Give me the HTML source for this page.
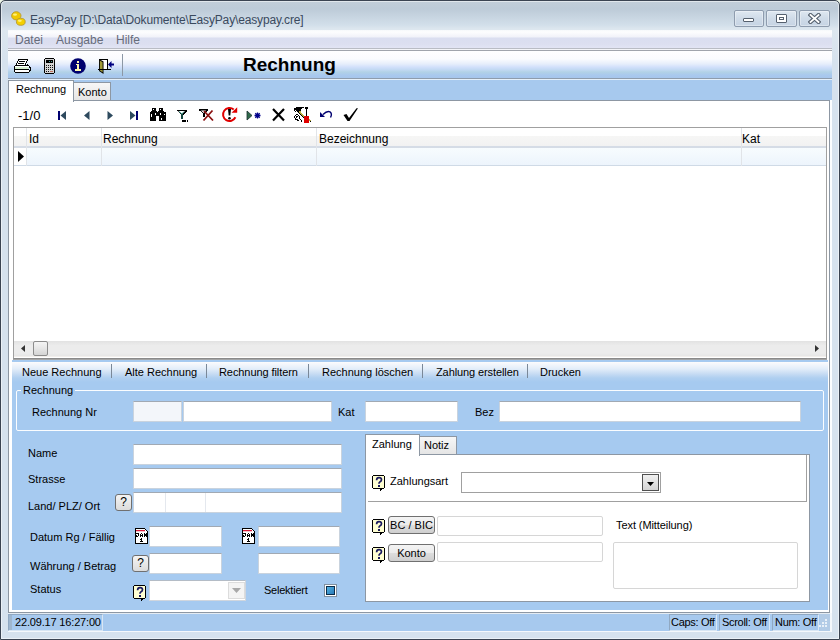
<!DOCTYPE html>
<html><head><meta charset="utf-8">
<style>
*{margin:0;padding:0;box-sizing:border-box}
html,body{width:840px;height:640px;overflow:hidden;background:#eef6e8}
body{position:relative;font-family:"Liberation Sans",sans-serif;font-size:11px;color:#000}
.a{position:absolute}
.t{position:absolute;white-space:nowrap;line-height:13px}
#win{left:0;top:0;width:840px;height:640px;border:1px solid #3b4452;border-radius:5px 5px 0 0;
 background:linear-gradient(#c2ced9 0px,#bdcbd8 8px,#d2dfea 24px,#dde7ef 28px,#d6e2ee 60px,#d6e2ee 640px);overflow:hidden}
#wininner{left:0;top:0;width:838px;height:638px;border:1px solid rgba(255,255,255,.5);border-radius:4px 4px 0 0}
.cap{top:10px;height:17px;border:1px solid #8e9cae;border-radius:2px;background:linear-gradient(#dfe8f1,#cfdbe8 50%,#c6d4e4);box-shadow:inset 0 0 0 1px rgba(255,255,255,.35)}
#menu{left:8px;top:30px;width:824px;height:18px;background:linear-gradient(#f6f8fb 0,#fdfdfe 2px,#f1f2f9 7px,#dadef0 8px,#dcdff0 14px,#e2e4f4 100%)}
.mi{color:#676c7a;font-size:12px;top:34px}
#tb{left:8px;top:51px;width:824px;height:27px;background:linear-gradient(#fefeff 0,#fafbfe 8px,#e6eefb 13px,#d2e0fb 16px,#c0d8f2 19px,#b2d2e6 21px,#a9c9ee 24px,#a6c6ec 27px)}
#tabstrip{left:8px;top:78px;width:824px;height:22px;background:#a7c9ee;border-top:1px solid #8e9cac;box-shadow:inset 0 1px 0 #e4f0fb}
#panel{left:8px;top:100px;width:822px;height:513px;background:#fff;border:1px solid #8d97a3}
#grid{left:13px;top:127px;width:814px;height:232px;border:1px solid #a0a0a0;border-bottom-color:#8a8a8a;background:#fff}
.hdr{top:0;height:19px;background:linear-gradient(#fff 0,#fff 8px,#f6f6f5 8px,#f2f2f2 18px)}
.blue{left:12px;top:360px;width:816px;height:250px;background:#a6caf0}
.inp{position:absolute;background:#fff;border:1px solid #c9d3de;border-top-color:#a1a9b3}
.lbl{position:absolute;white-space:nowrap;line-height:13px;font-size:11px;color:#000}
.qb{border:1px solid #707070;border-radius:3px;background:linear-gradient(#f4f4f4,#dcdcdc);text-align:center;font-size:12px;line-height:14px;color:#000}
.btn{border:1px solid #707070;border-radius:3px;background:linear-gradient(#f4f4f4 0,#ebebeb 50%,#dddddd 51%,#cfcfcf 100%);text-align:center;font-size:11px;line-height:16px;color:#000}
.sp{border:1px solid;border-color:#90a8c2 #d8e6f4 #d8e6f4 #90a8c2}
</style></head><body>
<div id="win" class="a"><div id="wininner" class="a"></div></div>

<!-- title -->
<svg class="a" style="left:10px;top:10px" width="18" height="17" viewBox="0 0 18 17">
 <ellipse cx="6.3" cy="5.8" rx="4.7" ry="4.1" fill="#f0c800" stroke="#b89a30" stroke-width=".9"/>
 <ellipse cx="10.8" cy="11.8" rx="4.4" ry="3.5" fill="#f4d000" stroke="#b89a30" stroke-width=".9"/>
 <ellipse cx="5" cy="4.6" rx="2" ry="1.2" fill="#fff07a"/>
 <ellipse cx="9.8" cy="10.8" rx="2" ry="1.1" fill="#fff07a"/>
</svg>
<div class="t" style="left:30px;top:13px;font-size:12px;color:#3a4a5e;letter-spacing:-0.15px;line-height:14px">EasyPay [D:\Data\Dokumente\EasyPay\easypay.cre]</div>
<div class="a cap" style="left:734px;width:30px"></div>
<div class="a cap" style="left:766px;width:31px"></div>
<div class="a cap" style="left:799px;width:31px"></div>
<div class="a" style="left:743px;top:18px;width:11px;height:4px;border:1px solid #55606e;background:#fff;border-radius:1px"></div>
<div class="a" style="left:776px;top:14px;width:11px;height:9px;border:1px solid #55606e;background:#fff;border-radius:1px"><div class="a" style="left:2px;top:2px;width:5px;height:3px;border:1px solid #55606e"></div></div>
<svg class="a" style="left:808px;top:13px" width="13" height="11" viewBox="0 0 13 11"><path d="M2.5 2 L10.5 9 M10.5 2 L2.5 9" stroke="#55606e" stroke-width="4" stroke-linecap="square"/><path d="M2.5 2 L10.5 9 M10.5 2 L2.5 9" stroke="#fff" stroke-width="1.8" stroke-linecap="square"/></svg>

<!-- menu -->
<div id="menu" class="a"></div>
<div class="a" style="left:8px;top:48px;width:824px;height:1px;background:#b9bcc4"></div>
<div class="a" style="left:8px;top:49px;width:824px;height:1px;background:#f3f4f8"></div>
<div class="a" style="left:8px;top:50px;width:824px;height:1px;background:#a0a4ac"></div>
<div class="t mi" style="left:15px">Datei</div>
<div class="t mi" style="left:56px">Ausgabe</div>
<div class="t mi" style="left:116px">Hilfe</div>

<!-- toolbar -->
<div id="tb" class="a"></div>
<div class="a" style="left:122px;top:54px;width:1px;height:22px;background:#8c98a6"></div>
<div class="t" style="left:243px;top:54px;font-size:19px;font-weight:bold;line-height:22px">Rechnung</div>


<!-- toolbar icons -->
<svg class="a" style="left:14px;top:59px" width="17" height="14" viewBox="0 0 17 14" shape-rendering="crispEdges"><rect x="5" y="1" width="8" height="1" fill="#fff"/><rect x="4" y="2" width="1" height="1" fill="#fff"/><rect x="11" y="2" width="1" height="1" fill="#fff"/><rect x="4" y="3" width="8" height="1" fill="#fff"/><rect x="3" y="4" width="1" height="1" fill="#fff"/><rect x="10" y="4" width="1" height="1" fill="#fff"/><rect x="3" y="5" width="8" height="1" fill="#fff"/><rect x="1" y="7" width="14" height="1" fill="#fff"/><rect x="1" y="11" width="14" height="1" fill="#fff"/><rect x="1" y="12" width="14" height="1" fill="#fff"/><rect x="4" y="0" width="10" height="1" fill="#000"/><rect x="4" y="1" width="1" height="1" fill="#000"/><rect x="13" y="1" width="1" height="1" fill="#000"/><rect x="3" y="2" width="1" height="1" fill="#000"/><rect x="5" y="2" width="6" height="1" fill="#000"/><rect x="12" y="2" width="1" height="1" fill="#000"/><rect x="3" y="3" width="1" height="1" fill="#000"/><rect x="12" y="3" width="1" height="1" fill="#000"/><rect x="2" y="4" width="1" height="1" fill="#000"/><rect x="4" y="4" width="6" height="1" fill="#000"/><rect x="11" y="4" width="1" height="1" fill="#000"/><rect x="2" y="5" width="1" height="1" fill="#000"/><rect x="11" y="5" width="1" height="1" fill="#000"/><rect x="13" y="5" width="1" height="1" fill="#000"/><rect x="1" y="6" width="14" height="1" fill="#000"/><rect x="0" y="7" width="1" height="1" fill="#000"/><rect x="15" y="7" width="1" height="1" fill="#000"/><rect x="0" y="8" width="1" height="1" fill="#000"/><rect x="1" y="8" width="13" height="1" fill="#d8f0d0"/><rect x="15" y="8" width="2" height="1" fill="#000"/><rect x="0" y="9" width="1" height="1" fill="#000"/><rect x="1" y="9" width="14" height="1" fill="#d8f0d0"/><rect x="16" y="9" width="1" height="1" fill="#000"/><rect x="0" y="10" width="15" height="1" fill="#000"/><rect x="16" y="10" width="1" height="1" fill="#000"/><rect x="0" y="11" width="1" height="1" fill="#000"/><rect x="15" y="11" width="2" height="1" fill="#000"/><rect x="0" y="12" width="1" height="1" fill="#000"/><rect x="15" y="12" width="1" height="1" fill="#000"/><rect x="1" y="13" width="14" height="1" fill="#000"/></svg>
<svg class="a" style="left:44px;top:58px" width="11" height="16" viewBox="0 0 11 16" shape-rendering="crispEdges">
 <path d="M1 0h9v1h1v14h-1v1h-9v-1h-1v-14h1z" fill="#000"/>
 <rect x="1" y="1" width="9" height="14" fill="#d4d4d4"/>
 <rect x="2" y="2" width="7" height="3" fill="#000"/>
 <rect x="5" y="3" width="1" height="1" fill="#4a9a9a"/><rect x="7" y="3" width="1" height="1" fill="#4a9a9a"/>
 <g fill="#111"><rect x="2" y="7" width="1" height="1"/><rect x="4" y="7" width="1" height="1"/><rect x="6" y="7" width="1" height="1"/><rect x="8" y="7" width="1" height="1"/>
 <rect x="2" y="9" width="1" height="1"/><rect x="4" y="9" width="1" height="1"/><rect x="6" y="9" width="1" height="1"/><rect x="8" y="9" width="1" height="1"/>
 <rect x="2" y="11" width="1" height="1"/><rect x="4" y="11" width="1" height="1"/><rect x="6" y="11" width="1" height="1"/><rect x="8" y="11" width="1" height="1"/>
 <rect x="2" y="13" width="1" height="1"/><rect x="4" y="13" width="1" height="1"/></g>
 <rect x="6" y="13" width="3" height="1" fill="#c07060"/>
</svg>
<svg class="a" style="left:70px;top:58px" width="16" height="16" viewBox="0 0 16 16">
 <circle cx="8" cy="8" r="7.8" fill="#00006e"/>
 <g fill="#fff8b0" shape-rendering="crispEdges"><rect x="7" y="3" width="2" height="2"/><rect x="6" y="6" width="3" height="1"/><rect x="7" y="7" width="2" height="4"/><rect x="5" y="11" width="6" height="2"/></g>
</svg>
<svg class="a" style="left:98px;top:58px" width="17" height="17" viewBox="0 0 17 17" shape-rendering="crispEdges">
 <path d="M1 1h9v11h-9z" fill="#000"/><rect x="2" y="2" width="7" height="9" fill="#fff"/>
 <path d="M1 1 L5.5 3.5 V16 L1 13Z" fill="#000" shape-rendering="auto"/>
 <path d="M1.9 2.6 L4.6 4.2 V14.2 L1.9 12.4Z" fill="#a09a38" shape-rendering="auto"/>
 <rect x="0" y="11" width="13" height="1" fill="#000"/>
 <path d="M10 6.5 L13.5 3 V5.5 H16 V7.5 H13.5 V10Z" fill="#000080" shape-rendering="auto"/>
</svg>
<!-- tab strip -->
<div id="tabstrip" class="a"></div>
<div class="a" style="left:73px;top:82px;width:38px;height:19px;border:1px solid #8d97a3;border-bottom:none;background:linear-gradient(#f7f7f7,#e4e4e4)"></div>
<div class="a" style="left:8px;top:80px;width:66px;height:22px;border:1px solid #8d97a3;border-bottom:none;background:#fff;z-index:2"></div>
<div class="t" style="left:16px;top:83px;z-index:3;font-size:11px">Rechnung</div>
<div class="t" style="left:78px;top:86px;font-size:11px">Konto</div>

<!-- panel -->
<div id="panel" class="a"></div>
<div class="a" style="left:830px;top:100px;width:2px;height:513px;background:#fbfdff"></div>
<div class="t" style="left:18px;top:109px;font-size:13px">-1/0</div>
<!-- nav icons -->
<svg class="a" style="left:56px;top:109px" width="310" height="16" viewBox="56 109 310 16" >
 <g shape-rendering="crispEdges"><rect x="58" y="111" width="2" height="9" fill="#000070"/><rect x="136" y="111" width="2" height="9" fill="#000070"/></g>
 <path d="M66 111 L60.5 115.5 L66 120Z" fill="#2e4a5e"/>
 <path d="M89.5 111 L84 115.5 L89.5 120Z" fill="#2e4a5e"/>
 <path d="M107.5 111 L113 115.5 L107.5 120Z" fill="#2e4a5e"/>
 <path d="M130 111 L135.5 115.5 L130 120Z" fill="#2e4a5e"/>
</svg>
<svg class="a" style="left:148px;top:105px" width="215" height="20" viewBox="148 105 215 20">
 <g shape-rendering="crispEdges" fill="#000">
  <!-- binoculars -->
 </g>
 <g shape-rendering="crispEdges"><rect x="152" y="108" width="4" height="1" fill="#000"/><rect x="159" y="108" width="4" height="1" fill="#000"/><rect x="152" y="109" width="1" height="1" fill="#000"/><rect x="154" y="109" width="2" height="1" fill="#000"/><rect x="159" y="109" width="1" height="1" fill="#000"/><rect x="161" y="109" width="2" height="1" fill="#000"/><rect x="152" y="110" width="4" height="1" fill="#000"/><rect x="159" y="110" width="4" height="1" fill="#000"/><rect x="151" y="111" width="6" height="1" fill="#000"/><rect x="158" y="111" width="6" height="1" fill="#000"/><rect x="150" y="112" width="16" height="1" fill="#000"/><rect x="150" y="113" width="5" height="1" fill="#000"/><rect x="156" y="113" width="4" height="1" fill="#000"/><rect x="161" y="113" width="5" height="1" fill="#000"/><rect x="150" y="114" width="1" height="1" fill="#000"/><rect x="152" y="114" width="3" height="1" fill="#000"/><rect x="156" y="114" width="4" height="1" fill="#000"/><rect x="161" y="114" width="3" height="1" fill="#000"/><rect x="165" y="114" width="1" height="1" fill="#000"/><rect x="150" y="115" width="1" height="1" fill="#000"/><rect x="152" y="115" width="14" height="1" fill="#000"/><rect x="150" y="116" width="1" height="1" fill="#000"/><rect x="152" y="116" width="4" height="1" fill="#000"/><rect x="159" y="116" width="7" height="1" fill="#000"/><rect x="150" y="117" width="6" height="1" fill="#000"/><rect x="159" y="117" width="7" height="1" fill="#000"/><rect x="150" y="118" width="6" height="1" fill="#000"/><rect x="159" y="118" width="2" height="1" fill="#000"/><rect x="162" y="118" width="4" height="1" fill="#000"/><rect x="150" y="119" width="6" height="1" fill="#000"/><rect x="159" y="119" width="2" height="1" fill="#000"/><rect x="162" y="119" width="4" height="1" fill="#000"/><rect x="150" y="120" width="6" height="1" fill="#000"/><rect x="159" y="120" width="7" height="1" fill="#000"/></g>
 <!-- filter -->
 <path d="M176 110 H187 V111 L183 115 V119 H181 V115 L177 111Z" fill="#000" shape-rendering="crispEdges"/>
 <path d="M178 111 H185 L182 114Z" fill="#fff"/>
 <path d="M181.5 114 L182.5 114 L182.5 119 L181.5 119Z" fill="#2a8a7a"/>
 <path d="M179 111.5 L182 114 L184 111.5" stroke="#3a9a8a" fill="none" stroke-width=".9"/>
 <rect x="182" y="120" width="4" height="2" fill="#000" shape-rendering="crispEdges"/><rect x="187" y="120" width="1" height="2" fill="#000" shape-rendering="crispEdges"/>
 <!-- filter x -->
 <path d="M199 109 H208 V110.5 L205 113.5 V117 H203 V113.5 L199.5 110.5Z" fill="#000" shape-rendering="crispEdges"/>
 <path d="M201 110.5 H206 L203.5 113Z" fill="#fff"/>
 <path d="M204 111 L213 120.5 M212.5 110.5 L203.5 120.5" stroke="#8a1010" stroke-width="1.8"/>
 <!-- refresh -->
 <path d="M233.7 109.5 A6.5 6.5 0 1 0 235.4 117.3" fill="none" stroke="#e00000" stroke-width="2"/>
 <path d="M231.5 112.8 L237.2 107.3 L237.2 112.8Z" fill="#e00000"/>
 <path d="M228 109 L231 109 L230.3 115.5 L228.7 115.5Z" fill="#000"/>
 <circle cx="229.5" cy="118.2" r="1.3" fill="#000"/>
 <!-- insert -->
 <path d="M247 111 L252 115.5 L247 120Z" fill="#2f6a4a" stroke="#1a3030" stroke-width=".8"/>
 <path d="M257.5 112.5 V118.5 M254.5 115.5 H260.5 M255.3 113.3 L259.7 117.7 M259.7 113.3 L255.3 117.7" stroke="#00008a" stroke-width="1.3"/>
 <!-- X -->
 <path d="M273 109 L284 120.5 M284 109 L273 120.5" stroke="#000" stroke-width="2.2"/>
 <!-- tools -->
 <g shape-rendering="crispEdges"><rect x="296" y="107" width="8" height="1" fill="#000"/><rect x="305" y="107" width="3" height="1" fill="#000"/><rect x="294" y="108" width="8" height="1" fill="#000"/><rect x="305" y="108" width="3" height="1" fill="#000"/><rect x="294" y="109" width="7" height="1" fill="#000"/><rect x="306" y="109" width="1" height="1" fill="#000"/><rect x="294" y="110" width="1" height="1" fill="#000"/><rect x="296" y="110" width="5" height="1" fill="#000"/><rect x="306" y="110" width="1" height="1" fill="#000"/><rect x="295" y="111" width="1" height="1" fill="#000"/><rect x="297" y="111" width="2" height="1" fill="#000"/><rect x="299" y="111" width="2" height="1" fill="#b8b040"/><rect x="306" y="111" width="1" height="1" fill="#000"/><rect x="298" y="112" width="1" height="1" fill="#000"/><rect x="299" y="112" width="2" height="1" fill="#b8b040"/><rect x="306" y="112" width="1" height="1" fill="#000"/><rect x="299" y="113" width="1" height="1" fill="#000"/><rect x="300" y="113" width="2" height="1" fill="#b8b040"/><rect x="306" y="113" width="1" height="1" fill="#000"/><rect x="296" y="114" width="2" height="1" fill="#000"/><rect x="300" y="114" width="1" height="1" fill="#000"/><rect x="301" y="114" width="2" height="1" fill="#b8b040"/><rect x="306" y="114" width="1" height="1" fill="#000"/><rect x="295" y="115" width="1" height="1" fill="#000"/><rect x="298" y="115" width="1" height="1" fill="#000"/><rect x="301" y="115" width="1" height="1" fill="#000"/><rect x="302" y="115" width="2" height="1" fill="#b8b040"/><rect x="306" y="115" width="1" height="1" fill="#000"/><rect x="294" y="116" width="1" height="1" fill="#000"/><rect x="296" y="116" width="2" height="1" fill="#000"/><rect x="299" y="116" width="1" height="1" fill="#000"/><rect x="302" y="116" width="1" height="1" fill="#000"/><rect x="303" y="116" width="1" height="1" fill="#b8b040"/><rect x="304" y="116" width="5" height="1" fill="#e00000"/><rect x="294" y="117" width="1" height="1" fill="#000"/><rect x="296" y="117" width="1" height="1" fill="#000"/><rect x="299" y="117" width="1" height="1" fill="#000"/><rect x="303" y="117" width="1" height="1" fill="#000"/><rect x="304" y="117" width="5" height="1" fill="#e00000"/><rect x="295" y="118" width="1" height="1" fill="#000"/><rect x="299" y="118" width="1" height="1" fill="#000"/><rect x="304" y="118" width="5" height="1" fill="#e00000"/><rect x="295" y="119" width="3" height="1" fill="#000"/><rect x="300" y="119" width="1" height="1" fill="#000"/><rect x="304" y="119" width="5" height="1" fill="#e00000"/><rect x="309" y="119" width="1" height="1" fill="#b8b040"/><rect x="297" y="120" width="2" height="1" fill="#000"/><rect x="301" y="120" width="1" height="1" fill="#000"/><rect x="304" y="120" width="5" height="1" fill="#e00000"/><rect x="309" y="120" width="2" height="1" fill="#b8b040"/><rect x="301" y="121" width="1" height="1" fill="#000"/><rect x="304" y="121" width="5" height="1" fill="#e00000"/><rect x="310" y="121" width="1" height="1" fill="#000"/><rect x="304" y="122" width="5" height="1" fill="#e00000"/></g>
 <!-- undo -->
 <path d="M323 114.5 Q327 110.5 330 111.8 Q332.5 113.5 330.5 117.5" fill="none" stroke="#000070" stroke-width="1.4"/>
 <path d="M320 112 L320 117 L325 117Z" fill="#000070"/>
 <!-- check -->
 <path d="M343.5 115 L346.5 114 L349 118 L356.5 108.3 L358 108.3 L349.5 121 L347.5 121Z" fill="#000"/>
</svg>



<!-- grid -->
<div id="grid" class="a">
 <div class="a hdr" style="left:0;width:812px"></div>
 <div class="a" style="left:0;top:18px;width:812px;height:2px;background:#d5dce6"></div>
 <div class="a" style="left:13px;top:20px;width:799px;height:17px;background:linear-gradient(#f7fcfe,#edf4fc)"></div>
 <div class="a" style="left:0;top:37px;width:812px;height:1px;background:#cfdae6"></div>
 <div class="a" style="left:12px;top:0;width:1px;height:38px;background:#e1e4e8"></div>
 <div class="a" style="left:87px;top:0;width:1px;height:38px;background:#e1e4e8"></div>
 <div class="a" style="left:302px;top:0;width:1px;height:38px;background:#e1e4e8"></div>
 <div class="a" style="left:727px;top:0;width:1px;height:38px;background:#e1e4e8"></div>
 <div class="t" style="left:15px;top:5px;font-size:12px">Id</div>
 <div class="t" style="left:89px;top:5px;font-size:12px">Rechnung</div>
 <div class="t" style="left:305px;top:5px;font-size:12px">Bezeichnung</div>
 <div class="t" style="left:728px;top:5px;font-size:12px">Kat</div>
 <svg class="a" style="left:4px;top:23px" width="6" height="11"><path d="M0 0 L6 5.5 L0 11Z" fill="#000"/></svg>
 <!-- scrollbar -->
 <div class="a" style="left:0;top:213px;width:812px;height:15px;background:linear-gradient(#e2e2e2,#ececec 30%,#ececec 80%,#e6e6e6)"></div>
 <div class="a" style="left:0;top:228px;width:812px;height:1px;background:#f2efec"></div>
 <div class="a" style="left:19px;top:213px;width:15px;height:15px;border:1px solid #8c8c8c;border-radius:2px;background:linear-gradient(#f4f4f4,#e6e6e6 50%,#d4d4d4)"></div>
 <svg class="a" style="left:7px;top:217px" width="4" height="7"><path d="M4 0 L0 3.5 L4 7Z" fill="#333"/></svg>
 <svg class="a" style="left:801px;top:217px" width="4" height="7"><path d="M0 0 L4 3.5 L0 7Z" fill="#333"/></svg>
</div>
<div class="a" style="left:13px;top:359px;width:814px;height:1px;background:#a4a4a4"></div>

<!-- blue area -->
<div class="a blue"></div>
<div class="a" style="left:12px;top:362px;width:816px;height:20px;background:linear-gradient(#fdfcfb 0,#f4f7fc 2px,#e2edf9 7px,#c6dbf3 12px,#afcff0 16px,#a6caf0 20px)"></div>
<div class="t" style="left:22px;top:366px">Neue Rechnung</div>
<div class="a" style="left:111px;top:364px;width:1px;height:14px;background:#7a8898"></div>
<div class="t" style="left:125px;top:366px">Alte Rechnung</div>
<div class="a" style="left:206px;top:364px;width:1px;height:14px;background:#7a8898"></div>
<div class="t" style="left:219px;top:366px;letter-spacing:-0.08px">Rechnung filtern</div>
<div class="a" style="left:308px;top:364px;width:1px;height:14px;background:#7a8898"></div>
<div class="t" style="left:322px;top:366px">Rechnung löschen</div>
<div class="a" style="left:422px;top:364px;width:1px;height:14px;background:#7a8898"></div>
<div class="t" style="left:436px;top:366px;letter-spacing:-0.1px">Zahlung erstellen</div>
<div class="a" style="left:527px;top:364px;width:1px;height:14px;background:#7a8898"></div>
<div class="t" style="left:540px;top:366px">Drucken</div>

<!-- groupbox -->
<div class="a" style="left:16px;top:390px;width:808px;height:41px;border:1px solid #fbfdff;border-radius:2px"></div>
<div class="a" style="left:21px;top:385px;width:54px;height:10px;background:#a6caf0"></div>
<div class="t" style="left:23px;top:384px">Rechnung</div>
<div class="t" style="left:32px;top:406px">Rechnung Nr</div>
<div class="inp" style="left:133px;top:401px;width:49px;height:21px;background:#f3f6fa"></div>
<div class="inp" style="left:183px;top:401px;width:149px;height:21px"></div>
<div class="t" style="left:338px;top:406px">Kat</div>
<div class="inp" style="left:365px;top:401px;width:93px;height:21px"></div>
<div class="t" style="left:475px;top:406px">Bez</div>
<div class="inp" style="left:499px;top:401px;width:302px;height:21px"></div>

<!-- symbols -->
<svg width="0" height="0" style="position:absolute">
 <defs>
  <symbol id="qi" viewBox="0 0 14 16">
   <g shape-rendering="crispEdges">
   <path d="M1 0h11v1h1v12h-1v1h-2v1h-1v1h-1v-2h-7v-1h-1v-12h1z" fill="#000"/>
   <rect x="1" y="1" width="11" height="12" fill="#ffffd2"/>
   <rect x="12" y="2" width="1" height="11" fill="#000"/>
   <rect x="2" y="13" width="7" height="1" fill="#000"/>
   </g>
   <path d="M4.6 5.2 Q4.6 2.6 7 2.6 Q9.5 2.6 9.5 4.8 Q9.5 6.2 7.8 7 Q7 7.4 7 8.8" fill="none" stroke="#1a1a60" stroke-width="1.7"/>
   <rect x="6" y="10" width="2" height="2" fill="#1a1a60" shape-rendering="crispEdges"/>
  </symbol>
  <symbol id="cal" viewBox="0 0 13 16"><g shape-rendering="crispEdges"><rect x="0" y="0" width="10" height="1" fill="#000"/><rect x="0" y="1" width="1" height="1" fill="#000"/><rect x="1" y="1" width="9" height="1" fill="#fff"/><rect x="10" y="1" width="1" height="1" fill="#000"/><rect x="0" y="2" width="1" height="1" fill="#000"/><rect x="1" y="2" width="9" height="1" fill="#d81c3c"/><rect x="10" y="2" width="1" height="1" fill="#fff"/><rect x="11" y="2" width="1" height="1" fill="#000"/><rect x="0" y="3" width="1" height="1" fill="#000"/><rect x="1" y="3" width="9" height="1" fill="#f6c4cc"/><rect x="10" y="3" width="2" height="1" fill="#fff"/><rect x="12" y="3" width="1" height="1" fill="#000"/><rect x="0" y="4" width="1" height="1" fill="#000"/><rect x="1" y="4" width="11" height="1" fill="#fff"/><rect x="12" y="4" width="1" height="1" fill="#000"/><rect x="0" y="5" width="4" height="1" fill="#000"/><rect x="4" y="5" width="2" height="1" fill="#fff"/><rect x="6" y="5" width="1" height="1" fill="#000"/><rect x="7" y="5" width="2" height="1" fill="#fff"/><rect x="9" y="5" width="1" height="1" fill="#000"/><rect x="10" y="5" width="1" height="1" fill="#fff"/><rect x="11" y="5" width="2" height="1" fill="#000"/><rect x="0" y="6" width="1" height="1" fill="#000"/><rect x="1" y="6" width="2" height="1" fill="#fff"/><rect x="3" y="6" width="1" height="1" fill="#000"/><rect x="4" y="6" width="1" height="1" fill="#fff"/><rect x="5" y="6" width="1" height="1" fill="#000"/><rect x="6" y="6" width="1" height="1" fill="#fff"/><rect x="7" y="6" width="1" height="1" fill="#000"/><rect x="8" y="6" width="1" height="1" fill="#fff"/><rect x="9" y="6" width="4" height="1" fill="#000"/><rect x="0" y="7" width="2" height="1" fill="#000"/><rect x="2" y="7" width="1" height="1" fill="#fff"/><rect x="3" y="7" width="1" height="1" fill="#000"/><rect x="4" y="7" width="1" height="1" fill="#fff"/><rect x="5" y="7" width="3" height="1" fill="#000"/><rect x="8" y="7" width="1" height="1" fill="#fff"/><rect x="9" y="7" width="4" height="1" fill="#000"/><rect x="0" y="8" width="3" height="1" fill="#000"/><rect x="3" y="8" width="2" height="1" fill="#fff"/><rect x="5" y="8" width="1" height="1" fill="#000"/><rect x="6" y="8" width="1" height="1" fill="#fff"/><rect x="7" y="8" width="1" height="1" fill="#000"/><rect x="8" y="8" width="1" height="1" fill="#fff"/><rect x="9" y="8" width="1" height="1" fill="#000"/><rect x="10" y="8" width="1" height="1" fill="#fff"/><rect x="11" y="8" width="2" height="1" fill="#000"/><rect x="0" y="9" width="1" height="1" fill="#000"/><rect x="1" y="9" width="11" height="1" fill="#fff"/><rect x="12" y="9" width="1" height="1" fill="#000"/><rect x="0" y="10" width="1" height="1" fill="#000"/><rect x="1" y="10" width="5" height="1" fill="#fff"/><rect x="6" y="10" width="1" height="1" fill="#000"/><rect x="7" y="10" width="5" height="1" fill="#fff"/><rect x="12" y="10" width="1" height="1" fill="#000"/><rect x="0" y="11" width="1" height="1" fill="#000"/><rect x="1" y="11" width="4" height="1" fill="#fff"/><rect x="5" y="11" width="2" height="1" fill="#000"/><rect x="7" y="11" width="5" height="1" fill="#fff"/><rect x="12" y="11" width="1" height="1" fill="#000"/><rect x="0" y="12" width="1" height="1" fill="#000"/><rect x="1" y="12" width="5" height="1" fill="#fff"/><rect x="6" y="12" width="1" height="1" fill="#000"/><rect x="7" y="12" width="5" height="1" fill="#fff"/><rect x="12" y="12" width="1" height="1" fill="#000"/><rect x="0" y="13" width="1" height="1" fill="#000"/><rect x="1" y="13" width="4" height="1" fill="#fff"/><rect x="5" y="13" width="3" height="1" fill="#000"/><rect x="8" y="13" width="4" height="1" fill="#fff"/><rect x="12" y="13" width="1" height="1" fill="#000"/><rect x="0" y="14" width="1" height="1" fill="#000"/><rect x="1" y="14" width="11" height="1" fill="#fff"/><rect x="12" y="14" width="1" height="1" fill="#000"/><rect x="0" y="15" width="13" height="1" fill="#000"/></g></symbol>
 </defs>
</svg>

<!-- lower left -->
<div class="t" style="left:28px;top:447px">Name</div>
<div class="inp" style="left:133px;top:444px;width:209px;height:21px"></div>
<div class="t" style="left:28px;top:473px">Strasse</div>
<div class="inp" style="left:133px;top:468px;width:209px;height:21px"></div>
<div class="t" style="left:28px;top:500px">Land/ PLZ/ Ort</div>
<div class="a qb" style="left:115px;top:494px;width:17px;height:17px"><span>?</span></div>
<div class="inp" style="left:133px;top:492px;width:209px;height:21px"></div>
<div class="a" style="left:165px;top:493px;width:1px;height:19px;background:#e4e8ee"></div>
<div class="a" style="left:205px;top:493px;width:1px;height:19px;background:#e4e8ee"></div>
<div class="t" style="left:30px;top:531px">Datum Rg / Fällig</div>
<svg class="a" style="left:135px;top:528px" width="13" height="16"><use href="#cal"/></svg>
<div class="inp" style="left:149px;top:526px;width:73px;height:21px"></div>
<svg class="a" style="left:242px;top:528px" width="13" height="16"><use href="#cal"/></svg>
<div class="inp" style="left:258px;top:526px;width:82px;height:21px"></div>
<div class="t" style="left:30px;top:560px">Währung / Betrag</div>
<div class="a qb" style="left:132px;top:555px;width:17px;height:17px"><span>?</span></div>
<div class="inp" style="left:149px;top:553px;width:73px;height:21px"></div>
<div class="inp" style="left:258px;top:553px;width:82px;height:21px"></div>
<div class="t" style="left:30px;top:583px">Status</div>
<svg class="a" style="left:133px;top:585px" width="14" height="16"><use href="#qi"/></svg>
<div class="inp" style="left:149px;top:580px;width:97px;height:21px;border-color:#d0d6de;border-top-color:#b4bcc6"></div>
<div class="a" style="left:228px;top:582px;width:17px;height:17px;border:1px solid #dcdcdc;background:#f4f4f4"></div>
<svg class="a" style="left:232px;top:588px" width="9" height="5"><path d="M0 0H9L4.5 5Z" fill="#a8a8a8"/></svg>
<div class="t" style="left:264px;top:584px;letter-spacing:-0.23px">Selektiert</div>
<div class="a" style="left:324px;top:584px;width:13px;height:13px;border:1px solid #8090a0;background:#fff"></div>
<div class="a" style="left:326px;top:586px;width:9px;height:9px;border:1px solid #0c2c4a;background:linear-gradient(135deg,#4fb0e0,#2a7ab8)"></div>

<!-- tab panel -->
<div class="a" style="left:419px;top:436px;width:38px;height:19px;border:1px solid #8d97a3;border-bottom:none;background:linear-gradient(#f7f7f7,#e4e4e4)"></div>
<div class="a" style="left:365px;top:454px;width:445px;height:148px;border:1px solid #8d97a3;background:#fff"></div>
<div class="a" style="left:365px;top:434px;width:55px;height:22px;border:1px solid #8d97a3;border-bottom:none;background:#fff"></div>
<div class="t" style="left:372px;top:438px">Zahlung</div>
<div class="t" style="left:424px;top:439px">Notiz</div>
<div class="a" style="left:368px;top:455px;width:439px;height:47px;border-right:1px solid #a0a0a0;border-bottom:1px solid #a0a0a0"></div>
<svg class="a" style="left:372px;top:475px" width="14" height="16"><use href="#qi"/></svg>
<div class="t" style="left:390px;top:475px">Zahlungsart</div>
<div class="inp" style="left:461px;top:472px;width:200px;height:21px;border-color:#a0a0a0"></div>
<div class="a" style="left:642px;top:474px;width:17px;height:17px;border:1px solid #505050;background:linear-gradient(#f0f0f0,#d4d4d4)"></div>
<svg class="a" style="left:647px;top:482px" width="7" height="4"><path d="M0 0H7L3.5 4Z" fill="#000"/></svg>

<svg class="a" style="left:372px;top:519px" width="14" height="16"><use href="#qi"/></svg>
<div class="a btn" style="left:388px;top:516px;width:47px;height:18px"><span>BC / BIC</span></div>
<div class="inp" style="left:437px;top:516px;width:166px;height:20px;border-color:#d6d6d6;border-radius:2px"></div>
<svg class="a" style="left:372px;top:547px" width="14" height="16"><use href="#qi"/></svg>
<div class="a btn" style="left:388px;top:544px;width:47px;height:18px"><span>Konto</span></div>
<div class="inp" style="left:437px;top:542px;width:166px;height:20px;border-color:#d6d6d6;border-radius:2px"></div>
<div class="t" style="left:616px;top:519px;letter-spacing:-0.08px">Text (Mitteilung)</div>
<div class="inp" style="left:613px;top:542px;width:185px;height:47px;border-color:#d6d6d6;border-radius:2px"></div>

<!-- status bar -->
<div class="a" style="left:8px;top:613px;width:824px;height:19px;background:#f4f8fc"></div>
<div class="a" style="left:8px;top:613px;width:822px;height:1px;background:#e4ebf2"></div>
<div class="a" style="left:8px;top:614px;width:822px;height:17px;background:#a7c9ee"></div>
<div class="a" style="left:820px;top:614px;width:10px;height:17px;background:#b2cbe6"></div>
<div class="a sp" style="left:8px;top:614px;width:95px;height:17px"></div>
<div class="a" style="left:9px;top:615px;width:3px;height:15px;background:#9fb6ce"></div>
<div class="a sp" style="left:669px;top:614px;width:48px;height:17px"></div>
<div class="a sp" style="left:719px;top:614px;width:51px;height:17px"></div>
<div class="a sp" style="left:772px;top:614px;width:47px;height:17px"></div>
<div class="t" style="left:15px;top:616px;letter-spacing:-0.17px">22.09.17 16:27:00</div>
<div class="t" style="left:671px;top:616px;letter-spacing:-0.3px">Caps: Off</div>
<div class="t" style="left:722px;top:616px;letter-spacing:-0.3px">Scroll: Off</div>
<div class="t" style="left:775px;top:616px;letter-spacing:-0.3px">Num: Off</div>
<svg class="a" style="left:818px;top:618px" width="10" height="11" shape-rendering="crispEdges"><g fill="#e8f0f8"><rect x="7" y="1" width="2" height="2"/><rect x="4" y="4" width="2" height="2"/><rect x="7" y="4" width="2" height="2"/><rect x="1" y="7" width="2" height="2"/><rect x="4" y="7" width="2" height="2"/><rect x="7" y="7" width="2" height="2"/></g></svg>
</body></html>
